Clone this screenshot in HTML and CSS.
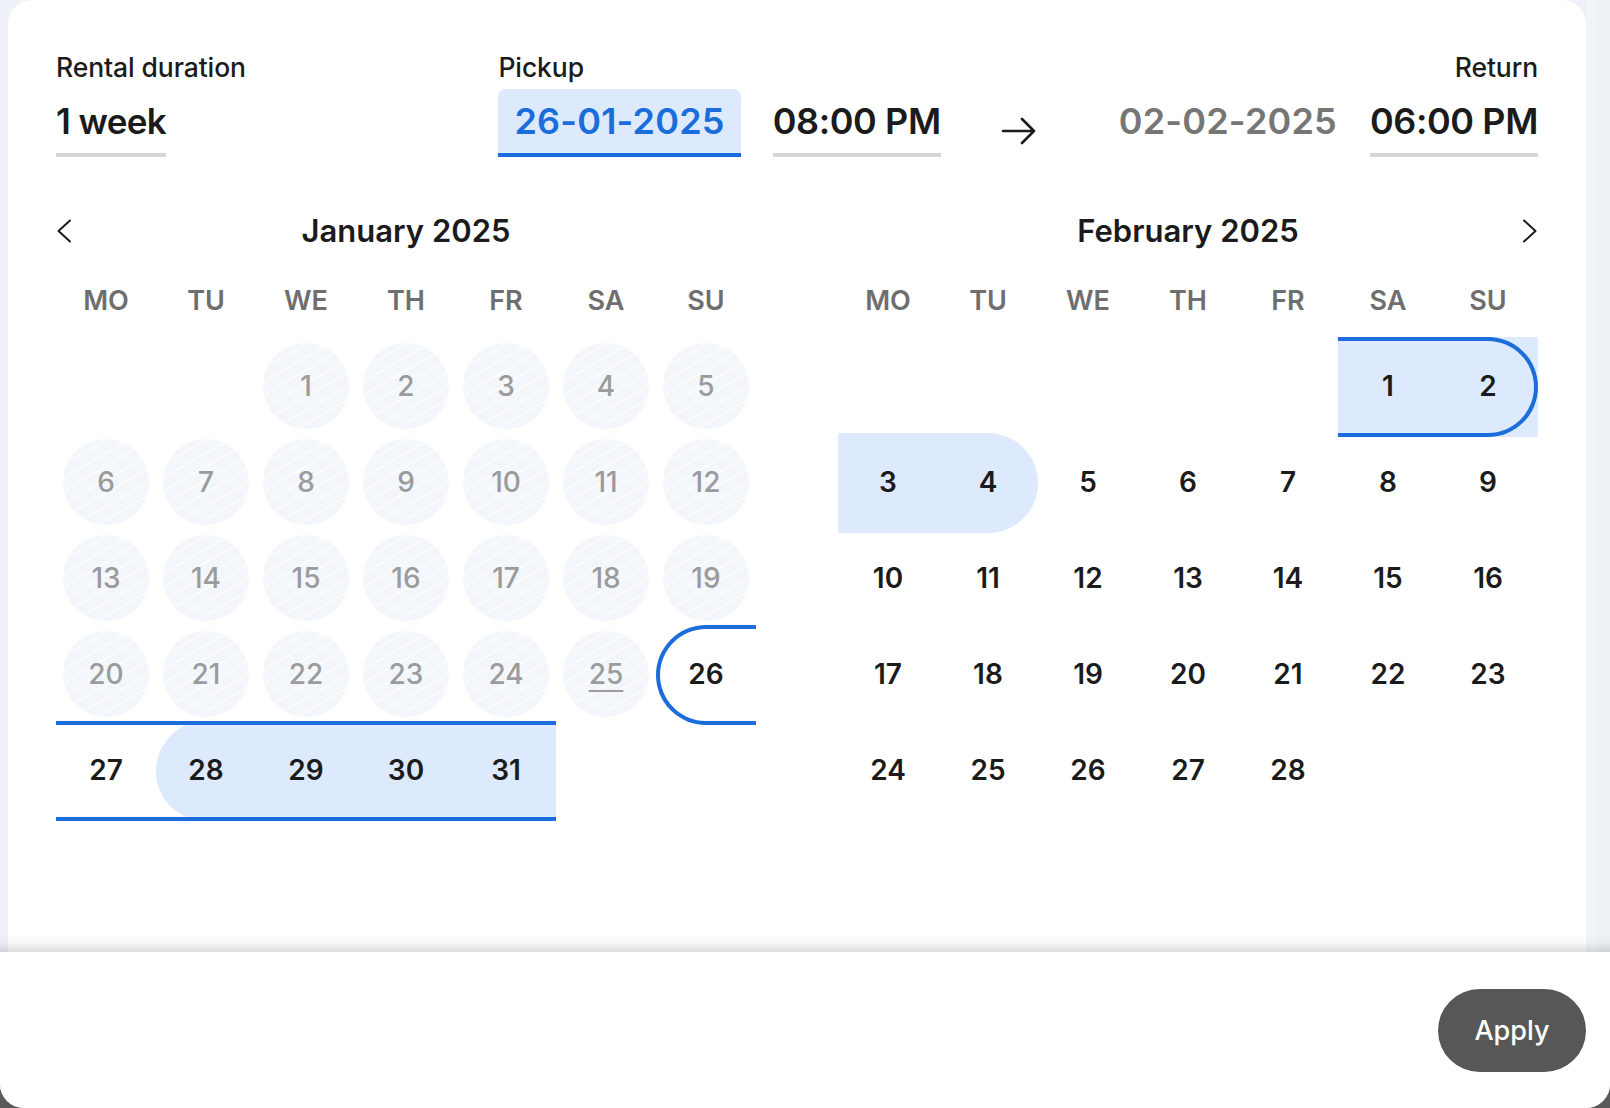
FILE: index.html
```html
<!DOCTYPE html>
<html>
<head>
<meta charset="utf-8">
<title>Rental dates</title>
	<link rel="stylesheet" href="styles.css">
</head>
<body>
	<div class="modal">
		<div class="scroll-area">
			<div class="card">
				<div class="fields">
					<div class="field duration">
						<div class="label">Rental duration</div>
						<div class="value underline">1 week</div>
					</div>
					<div class="field">
						<div class="label">Pickup</div>
						<div class="values">
							<div class="value date active">26-01-2025</div>
							<div class="value underline time">08:00 PM</div>
						</div>
					</div>
					<svg class="arrow" width="36" height="30" viewBox="0 0 36 30">
						<path d="M2 15H33M21 3L33 15L21 27" fill="none" stroke="#1b1b1b" stroke-width="2.6" stroke-linecap="round" stroke-linejoin="round"/>
					</svg>
					<div class="field return">
						<div class="label">Return</div>
						<div class="values">
							<div class="value date muted">02-02-2025</div>
							<div class="value underline time">06:00 PM</div>
						</div>
					</div>
				</div>

				<div class="months">
					<div class="month">
						<div class="month-head">
							<svg class="chevron" width="16" height="24" viewBox="0 0 16 24">
								<path d="M14 1.5L2.5 12L14 22.5" fill="none" stroke="#1b1b1b" stroke-width="2" stroke-linecap="round" stroke-linejoin="round"/>
							</svg>
							<div class="month-title">January 2025</div>
							<span></span>
						</div>
						<div class="weekdays">
							<div>MO</div><div>TU</div><div>WE</div><div>TH</div><div>FR</div><div>SA</div><div>SU</div>
						</div>
						<div class="days">
							<div class="day"></div>
							<div class="day"></div>
							<div class="day off"><span>1</span></div>
							<div class="day off"><span>2</span></div>
							<div class="day off"><span>3</span></div>
							<div class="day off"><span>4</span></div>
							<div class="day off"><span>5</span></div>
							<div class="day off"><span>6</span></div>
							<div class="day off"><span>7</span></div>
							<div class="day off"><span>8</span></div>
							<div class="day off"><span>9</span></div>
							<div class="day off"><span>10</span></div>
							<div class="day off"><span>11</span></div>
							<div class="day off"><span>12</span></div>
							<div class="day off"><span>13</span></div>
							<div class="day off"><span>14</span></div>
							<div class="day off"><span>15</span></div>
							<div class="day off"><span>16</span></div>
							<div class="day off"><span>17</span></div>
							<div class="day off"><span>18</span></div>
							<div class="day off"><span>19</span></div>
							<div class="day off"><span>20</span></div>
							<div class="day off"><span>21</span></div>
							<div class="day off"><span>22</span></div>
							<div class="day off"><span>23</span></div>
							<div class="day off"><span>24</span></div>
							<div class="day off today"><span><u>25</u></span></div>
							<div class="day sel sel-start"><span>26</span></div>
							<div class="day sel"><span>27</span></div>
							<div class="day sel fill fill-start"><span>28</span></div>
							<div class="day sel fill"><span>29</span></div>
							<div class="day sel fill"><span>30</span></div>
							<div class="day sel fill"><span>31</span></div>
						</div>
					</div>

					<div class="month">
						<div class="month-head">
							<span></span>
							<div class="month-title">February 2025</div>
							<svg class="chevron next" width="16" height="24" viewBox="0 0 16 24">
								<path d="M2 1.5L13.5 12L2 22.5" fill="none" stroke="#1b1b1b" stroke-width="2" stroke-linecap="round" stroke-linejoin="round"/>
							</svg>
						</div>
						<div class="weekdays">
							<div>MO</div><div>TU</div><div>WE</div><div>TH</div><div>FR</div><div>SA</div><div>SU</div>
						</div>
						<div class="days">
							<div class="day"></div>
							<div class="day"></div>
							<div class="day"></div>
							<div class="day"></div>
							<div class="day"></div>
							<div class="day sel fill"><span>1</span></div>
							<div class="day sel sel-end fill"><span>2</span></div>
							<div class="day fill"><span>3</span></div>
							<div class="day fill fill-end"><span>4</span></div>
							<div class="day"><span>5</span></div>
							<div class="day"><span>6</span></div>
							<div class="day"><span>7</span></div>
							<div class="day"><span>8</span></div>
							<div class="day"><span>9</span></div>
							<div class="day"><span>10</span></div>
							<div class="day"><span>11</span></div>
							<div class="day"><span>12</span></div>
							<div class="day"><span>13</span></div>
							<div class="day"><span>14</span></div>
							<div class="day"><span>15</span></div>
							<div class="day"><span>16</span></div>
							<div class="day"><span>17</span></div>
							<div class="day"><span>18</span></div>
							<div class="day"><span>19</span></div>
							<div class="day"><span>20</span></div>
							<div class="day"><span>21</span></div>
							<div class="day"><span>22</span></div>
							<div class="day"><span>23</span></div>
							<div class="day"><span>24</span></div>
							<div class="day"><span>25</span></div>
							<div class="day"><span>26</span></div>
							<div class="day"><span>27</span></div>
							<div class="day"><span>28</span></div>
						</div>
					</div>
				</div>
			</div>
			<div class="scrollbar"></div>
		</div>

		<div class="footer">
			<button class="apply">Apply</button>
		</div>
	</div>
</body>
</html>
```

FILE: styles.css
```css
html {
	background: #5a5a5a;
}
body {
	margin: 0;
	padding: 0;
	font-family: Inter, "Noto Sans", sans-serif;
	color: #1b1b1b;
}
.modal {
	width: 1610px;
	height: 1108px;
	display: flex;
	flex-direction: column;
	background: #eef2f8;
	border-radius: 0 0 24px 24px;
	overflow: hidden;
}
.scroll-area {
	flex: 1;
	display: flex;
	padding-left: 8px;
	min-height: 0;
}
.card {
	flex: 1;
	background: #fff;
	border-radius: 24px 24px 0 0;
	padding: 52px 48px 0;
}
.scrollbar {
	width: 24px;
	background: linear-gradient(90deg, #f1f5f9 0 11px, #edf2f7 11px);
}

/* top fields */
.fields {
	display: flex;
	align-items: flex-end;
}
.field.duration {
	flex: 1;
}
.label {
	font-size: 26.5px;
	line-height: 30px;
	font-weight: 500;
	margin-bottom: 7px;
	letter-spacing: -0.1px;
}
.return .label {
	text-align: right;
}
.values {
	display: flex;
	gap: 32px;
}
.return .values {
	gap: 17px;
}
.value {
	display: inline-block;
	height: 64px;
	line-height: 64px;
	font-size: 36px;
	font-weight: 600;
	border-bottom: 4px solid transparent;
	white-space: nowrap;
}
.value.time {
	letter-spacing: -0.4px;
}
.duration .value {
	font-size: 35px;
	letter-spacing: -0.6px;
}
.value.underline {
	border-bottom-color: #d6d6d6;
}
.value.date {
	padding: 0 16px;
	border-radius: 8px 8px 0 0;
	letter-spacing: 0.2px;
}
.value.active {
	background: #dde9fc;
	color: #1a6ddb;
	border-bottom-color: #1a6ddb;
}
.value.muted {
	color: #767676;
}
.arrow {
	margin: 0 66px 11px 60px;
}

/* months */
.months {
	display: grid;
	grid-template-columns: 700px 700px;
	gap: 82px;
	margin-top: 50px;
}
.month-head {
	display: grid;
	grid-template-columns: 40px 1fr 40px;
	align-items: center;
	height: 48px;
}
.chevron.next {
	justify-self: end;
}
.month-title {
	text-align: center;
	font-size: 31px;
	font-weight: 600;
	line-height: 48px;
}
.weekdays {
	display: grid;
	grid-template-columns: repeat(7, 100px);
	margin-top: 22px;
	font-size: 27px;
	line-height: 48px;
	font-weight: 600;
	color: #6e6e6e;
	text-align: center;
}
.days {
	display: grid;
	grid-template-columns: repeat(7, 100px);
	grid-auto-rows: 96px;
	margin-top: 13px;
}
.day {
	position: relative;
	display: flex;
	align-items: center;
	justify-content: center;
	font-size: 28px;
	font-weight: 600;
	color: #1b1b1b;
}
.day span {
	position: relative;
	z-index: 2;
}
.day.off span {
	width: 86px;
	height: 86px;
	border-radius: 50%;
	display: flex;
	align-items: center;
	justify-content: center;
	background: repeating-linear-gradient(150deg, #f3f6fb 0 10px, #fafcfe 10px 11.5px);
	color: #9b9b9b;
	font-weight: 500;
}
.day.today u {
	text-decoration-thickness: 2px;
	text-underline-offset: 6px;
}
.day.fill::before {
	content: "";
	position: absolute;
	top: -1px;
	bottom: -3px;
	left: 0;
	right: 0;
	background: #dde9fc;
}
.day.fill-start::before {
	border-radius: 50px 0 0 50px;
}
.day.fill-end::before {
	border-radius: 0 50px 50px 0;
}
.day.sel::after {
	content: "";
	position: absolute;
	top: -1px;
	bottom: -3px;
	left: 0;
	right: 0;
	border-top: 4px solid #1a6ddb;
	border-bottom: 4px solid #1a6ddb;
	z-index: 1;
}
.day.sel-start::after {
	border-left: 4px solid #1a6ddb;
	border-radius: 50px 0 0 50px;
}
.day.sel-end::after {
	border-right: 4px solid #1a6ddb;
	border-radius: 0 50px 50px 0;
}

/* footer */
.footer {
	position: relative;
	height: 156px;
	flex-shrink: 0;
	background: #fff;
	display: flex;
	align-items: center;
	justify-content: flex-end;
	padding-right: 24px;
}
.footer::before {
	content: "";
	position: absolute;
	left: 0;
	right: 0;
	top: -18px;
	height: 18px;
	background: linear-gradient(rgba(0, 0, 0, 0), rgba(0, 0, 0, 0.03) 50%, rgba(0, 0, 0, 0.13));
}
.apply {
	width: 148px;
	height: 83px;
	border: none;
	border-radius: 42px;
	background: #575757;
	color: #fff;
	font-family: Inter, "Noto Sans", sans-serif;
	font-size: 27px;
	font-weight: 500;
}
```
